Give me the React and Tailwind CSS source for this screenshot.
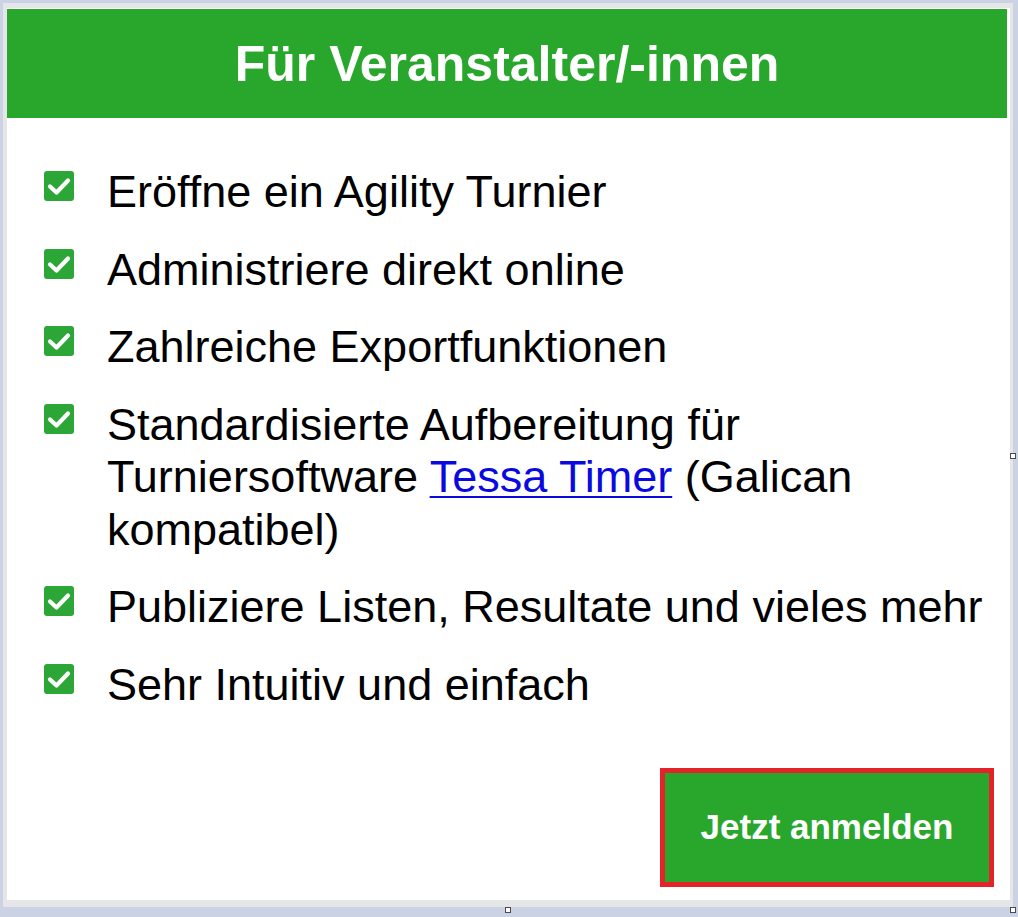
import React from "react";

function Check() {
  return (
    <span className="mt-[5px] flex h-[30px] w-[30px] shrink-0 items-center justify-center rounded-[3px] bg-[#2ca636]">
      <svg width="30" height="30" viewBox="0 0 30 30" fill="none">
        <polyline points="6,15.5 12.5,21.5 24,9.5" stroke="#ffffff" strokeWidth="4.2" strokeLinecap="round" strokeLinejoin="round" />
      </svg>
    </span>
  );
}

function Item({ children }) {
  return (
    <li className="flex gap-[33px]">
      <Check />
      <span className="text-[45px] leading-[52.5px] text-black">{children}</span>
    </li>
  );
}

export default function App() {
  return (
    <div className="relative h-[917px] w-[1018px] overflow-hidden bg-[#cad2e3] p-[3px] font-['Liberation_Sans',Arial,sans-serif]">
      <div className="h-[904px] w-[1010px] bg-[#e5e6e8] pb-[7px] pl-[4px] pr-[3px] pt-[5px]">
        <div className="flex h-full flex-col bg-white pr-[3px] pt-[1px]">
          <div className="flex h-[109px] items-center justify-center bg-[#29a72d]">
            <h1 className="text-[50px] font-bold leading-none text-white">Für Veranstalter/-innen</h1>
          </div>
          <ul className="mt-[48px] flex flex-col gap-[25px] pl-[37px]">
            <Item>Eröffne ein Agility Turnier</Item>
            <Item>Administriere direkt online</Item>
            <Item>Zahlreiche Exportfunktionen</Item>
            <Item>
              Standardisierte Aufbereitung für Turniersoftware{" "}
              <a href="#" className="text-[#0a0ae0] underline decoration-[2px] underline-offset-[4px]">Tessa Timer</a> (Galican kompatibel)
            </Item>
            <Item>Publiziere Listen, Resultate und vieles mehr</Item>
            <Item>Sehr Intuitiv und einfach</Item>
          </ul>
          <div className="mt-auto flex justify-end pb-[13px] pr-[13px]">
            <button className="flex h-[119px] w-[334px] items-center justify-center border-[5px] border-[#e3222a] bg-[#29a72d] text-[35px] font-bold text-white">
              Jetzt anmelden
            </button>
          </div>
        </div>
      </div>
      <span className="absolute left-[1010px] top-[453px] h-[6px] w-[6px] border border-[#4a4a4a] bg-white" />
      <span className="absolute left-[505px] top-[907px] h-[6px] w-[6px] border border-[#4a4a4a] bg-white" />
      <span className="absolute left-[1010px] top-[907px] h-[6px] w-[6px] border border-[#4a4a4a] bg-white" />
    </div>
  );
}
